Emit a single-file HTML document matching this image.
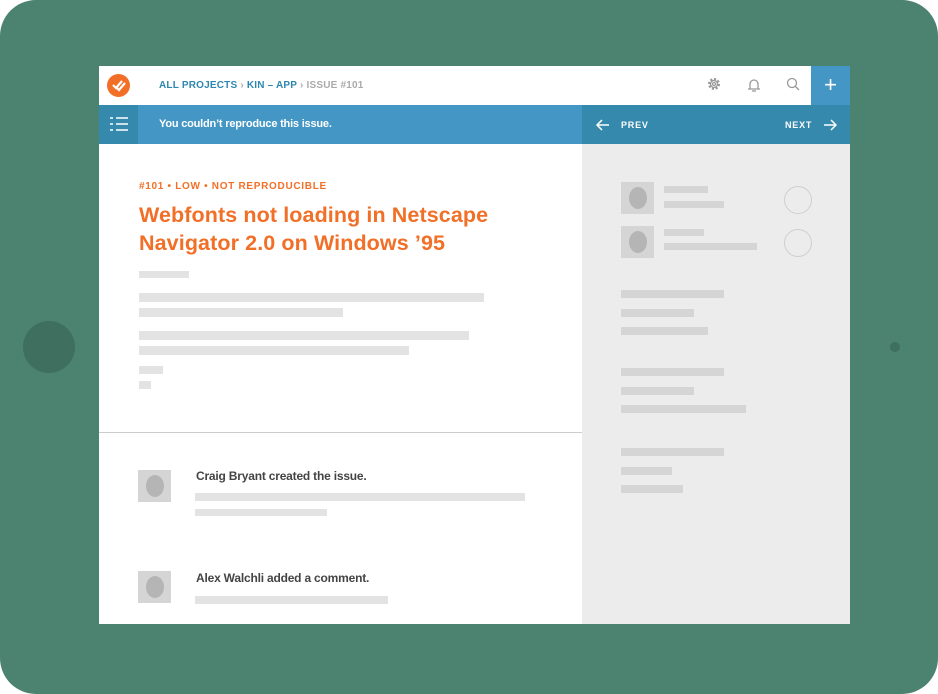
<!DOCTYPE html><html><head><style>
*{margin:0;padding:0;box-sizing:border-box}
body{width:938px;height:694px;background:#fff;position:relative;overflow:hidden;font-family:"Liberation Sans",sans-serif}
.a{position:absolute}
.g{position:absolute;background:#e3e3e3;height:9px}
.av{position:absolute;width:33px;height:32px;background:#d5d5d5}
.av::after{content:"";position:absolute;left:8px;top:5px;width:18px;height:22px;border-radius:50%;background:#b5b5b5}
.rc{position:absolute;width:28px;height:28px;border:1.5px solid #cfcfcf;border-radius:50%}
</style></head><body>
<div class="a" style="left:0;top:0;width:938px;height:694px;background:#4b8270;border-radius:36px"></div>
<div class="a" style="left:23px;top:321px;width:52px;height:52px;border-radius:50%;background:#3e6f5f"></div>
<div class="a" style="left:890px;top:342px;width:10px;height:10px;border-radius:50%;background:#3e6f5f"></div>
<div class="a" style="left:99px;top:66px;width:751px;height:558px;background:#fff"></div>
<div class="a" style="left:107px;top:74px;width:23px;height:23px;border-radius:50%;background:#f26f27"></div>
<svg class="a" style="left:107px;top:74px" width="23" height="23"><path d="M6 11l3 3 6-7M10 14l2 2 6-7" stroke="#fff" stroke-width="2.2" fill="none"/></svg>
<div class="a" style="left:159px;top:80px;font-size:10px;font-weight:bold;letter-spacing:.2px;color:#2e87b0">ALL PROJECTS <span style="color:#aaa">›</span> KIN – APP <span style="color:#aaa">› ISSUE #101</span></div>
<svg class="a" style="left:705px;top:76px" width="110" height="18" fill="none" stroke="#999" stroke-width="1.3"><circle cx="9" cy="8" r="4.5" stroke-dasharray="2 1.5" stroke-width="3"/><circle cx="9" cy="8" r="3.5"/><circle cx="9" cy="8" r="1.5"/><path d="M43 13h12M45 13v-5a4 4 0 0 1 8 0v5M47 15h4"/><circle cx="87" cy="7" r="4.5"/><path d="M90 10l4 4"/></svg>
<div class="a" style="left:811px;top:66px;width:39px;height:39px;background:#4496c4;color:#fff;font-size:22px;text-align:center;line-height:37px">+</div>
<div class="a" style="left:99px;top:105px;width:483px;height:39px;background:#4496c4"></div>
<div class="a" style="left:99px;top:105px;width:39px;height:39px;background:#3589ad"></div>
<svg class="a" style="left:108px;top:116px" width="22" height="16" stroke="#fff" stroke-width="1.4"><path d="M2 2h3M8 2h12M2 8h3M8 8h12M2 14h3M8 14h12"/></svg>
<div class="a" style="left:159px;top:118px;color:#fff;font-size:11px;font-weight:bold;letter-spacing:-.2px">You couldn’t reproduce this issue.</div>
<div class="a" style="left:582px;top:105px;width:268px;height:39px;background:#3589ad"></div>
<svg class="a" style="left:595px;top:117px" width="244" height="16" stroke="#fff" stroke-width="1.5" fill="none"><path d="M14 8H2M7 3L2 8l5 5M229 8h12M236 3l5 5-5 5"/></svg>
<div class="a" style="left:621px;top:120px;color:#fff;font-size:9px;font-weight:bold;letter-spacing:.8px">PREV</div>
<div class="a" style="left:785px;top:120px;color:#fff;font-size:9px;font-weight:bold;letter-spacing:.8px">NEXT</div>
<div class="a" style="left:582px;top:144px;width:268px;height:480px;background:#ececec"></div>
<div class="a" style="left:139px;top:181px;color:#f26f27;font-size:10px;font-weight:bold;letter-spacing:.7px">#101 • LOW • NOT REPRODUCIBLE</div>
<div class="a" style="left:139px;top:201px;color:#f26f27;font-size:21.5px;font-weight:bold;line-height:28px;letter-spacing:.1px">Webfonts not loading in Netscape<br>Navigator 2.0 on Windows ’95</div>
<div class="g" style="left:139px;top:271px;width:50px;height:7px"></div>
<div class="g" style="left:139px;top:293px;width:345px"></div>
<div class="g" style="left:139px;top:308px;width:204px"></div>
<div class="g" style="left:139px;top:331px;width:330px"></div>
<div class="g" style="left:139px;top:346px;width:270px"></div>
<div class="g" style="left:139px;top:366px;width:24px;height:8px"></div>
<div class="g" style="left:139px;top:381px;width:12px;height:8px"></div>
<div class="a" style="left:99px;top:432px;width:483px;height:1px;background:#ccc"></div>
<div class="av" style="left:138px;top:470px"></div>
<div class="a" style="left:196px;top:469px;font-size:12px;font-weight:bold;color:#444;letter-spacing:-.2px">Craig Bryant created the issue.</div>
<div class="g" style="left:195px;top:493px;width:330px;height:8px"></div>
<div class="g" style="left:195px;top:509px;width:132px;height:7px"></div>
<div class="av" style="left:138px;top:571px"></div>
<div class="a" style="left:196px;top:571px;font-size:12px;font-weight:bold;color:#444;letter-spacing:-.2px">Alex Walchli added a comment.</div>
<div class="g" style="left:195px;top:596px;width:193px;height:8px"></div>
<div class="av" style="left:621px;top:182px"></div>
<div class="g" style="left:664px;top:186px;width:44px;height:7px;background:#d5d5d5"></div>
<div class="g" style="left:664px;top:201px;width:60px;height:7px;background:#d5d5d5"></div>
<div class="rc" style="left:784px;top:186px"></div>
<div class="av" style="left:621px;top:226px"></div>
<div class="g" style="left:664px;top:229px;width:40px;height:7px;background:#d5d5d5"></div>
<div class="g" style="left:664px;top:243px;width:93px;height:7px;background:#d5d5d5"></div>
<div class="rc" style="left:784px;top:229px"></div>
<div class="g" style="left:621px;top:290px;width:103px;height:8px;background:#d5d5d5"></div>
<div class="g" style="left:621px;top:309px;width:73px;height:8px;background:#d5d5d5"></div>
<div class="g" style="left:621px;top:327px;width:87px;height:8px;background:#d5d5d5"></div>
<div class="g" style="left:621px;top:368px;width:103px;height:8px;background:#d5d5d5"></div>
<div class="g" style="left:621px;top:387px;width:73px;height:8px;background:#d5d5d5"></div>
<div class="g" style="left:621px;top:405px;width:125px;height:8px;background:#d5d5d5"></div>
<div class="g" style="left:621px;top:448px;width:103px;height:8px;background:#d5d5d5"></div>
<div class="g" style="left:621px;top:467px;width:51px;height:8px;background:#d5d5d5"></div>
<div class="g" style="left:621px;top:485px;width:62px;height:8px;background:#d5d5d5"></div>
</body></html>
